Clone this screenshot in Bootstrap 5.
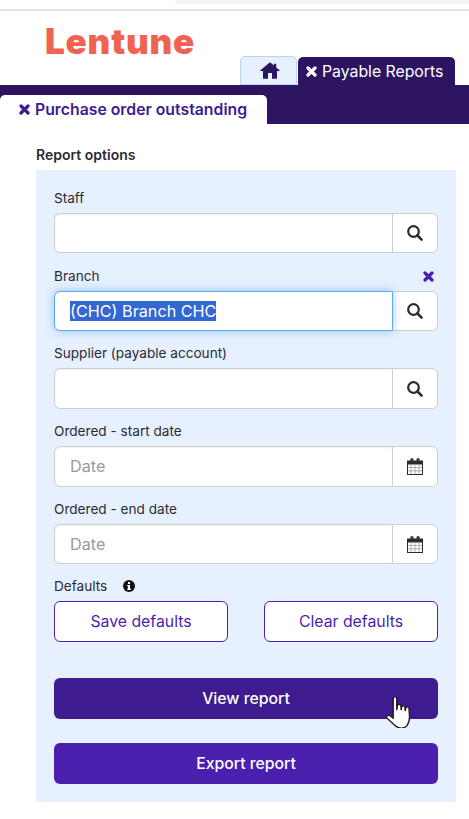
<!DOCTYPE html>
<html lang="en">
<head>
    <meta charset="UTF-8">
    <meta name="viewport" content="width=device-width, initial-scale=1.0">
    <title>Purchase order outstanding</title>
    <link href="https://cdn.jsdelivr.net/npm/bootstrap@5.3.0/dist/css/bootstrap.min.css" rel="stylesheet">
    <style>
        body {
            background-color: #fff;
            font-family: "Inter", "Liberation Sans", sans-serif;
            font-size: 14px;
            color: #2b2b33;
            height: 819px;
            overflow: hidden;
            position: relative;
        }
        .chrome-strip {
            height: 11px;
            border-bottom: 2px solid #e2e2e2;
            padding-left: 175px;
        }
        .chrome-pill {
            height: 4px;
            background: #f1f3f4;
            border-bottom-left-radius: 10px;
        }
        .top-head {
            height: 74px;
            padding-left: 45px;
        }
        .brand-word {
            color: #f06353;
            font-weight: 900;
            font-size: 35px;
            line-height: 1;
            padding-top: 13px;
            letter-spacing: 0.8px;
        }
        .tab-home {
            width: 57px;
            height: 29px;
            background: #e6f0fe;
            border: 1px solid #b6d4f5;
            border-radius: 5px 5px 0 0;
            margin-right: 1px;
            padding-left: 2px;
        }
        .tab-dark {
            height: 28px;
            width: 157px;
            background: #2c1461;
            color: #fff;
            border-radius: 5px 5px 0 0;
            font-size: 15.8px;
            padding: 1px 0 0 8px;
            gap: 5px;
        }
        .tab-row {
            padding-right: 14px;
            height: 74px;
        }
        .sub-bar {
            height: 39px;
            background: #2c1461;
            padding-top: 10px;
        }
        .tab-light {
            width: 267px;
            height: 29px;
            background: #fff;
            color: #3d1c8f;
            border-radius: 5px 5px 0 0;
            font-size: 15.8px;
            font-weight: 600;
            padding-left: 19px;
            gap: 5px;
        }
        .opts-title {
            margin: 22px 0 0 36px;
            height: 24px;
            line-height: 18px;
            font-size: 14px;
            font-weight: 600;
        }
        .opts-panel {
            margin-left: 36px;
            width: 420px;
            height: 632px;
            background: #e6f0fe;
            padding: 17.75px 18px 18px;
        }
        .fld-label {
            line-height: 21px;
            margin-bottom: 4px;
            font-size: 13.6px;
        }
        .fld {
            margin-bottom: 12.25px;
        }
        .fld-last {
            margin-bottom: 11.5px;
        }
        .fld .form-control {
            height: 40.5px;
            font-size: 16.2px;
            padding-left: 15px;
            color: #2b2b33;
            border-color: #cfcfcf;
            box-shadow: inset 0 1px 2px rgba(0, 0, 0, .06);
        }
        .fld .form-control::placeholder {
            color: #9a9a9f;
        }
        .fld .form-control:focus {
            border-color: #5eaaf0;
            box-shadow: 0 0 8px rgba(94, 170, 240, .65);
            position: relative;
            z-index: 5;
        }
        .fld .form-control::selection {
            background: #3367d1;
            color: #fff;
        }
        .addon {
            width: 46px;
            justify-content: center;
            background: #fff;
            border-color: #cfcfcf;
            padding: 0;
        }
        .btn-line {
            width: 174px;
            height: 41px;
            background: #fff;
            color: #4b1fae;
            border: 1px solid #4b1fae;
            font-size: 15.8px;
            padding: 1px 0 0;
        }
        .btn-solid {
            height: 41px;
            color: #fff;
            font-size: 15.8px;
            font-weight: 450;
            padding: 1px 0 0;
            background: #4b1fae;
            border: 0;
        }
        .btn-hover {
            background: #3e1b8e;
        }
        .view-gap {
            margin-top: 36px;
        }
        .hand-cursor {
            position: absolute;
            left: 386px;
            top: 697px;
        }
    </style>
</head>
<body>
    <div class="chrome-strip"><div class="chrome-pill"></div></div>

    <div class="top-head d-flex justify-content-between">
        <div class="brand-word">Lentune</div>
        <div class="tab-row d-flex align-items-end">
            <div class="tab-home d-flex align-items-center justify-content-center">
                <svg width="20" height="17" viewBox="0 0 20 17"><path fill="#2c1461" d="M10 0.3 L14 3.6 V1.8 H16.2 V5.4 L19.6 8.2 V9 H17 V16.7 H12 V11 H8 V16.7 H3 V9 H0.4 V8.2 Z"/></svg>
            </div>
            <div class="tab-dark d-flex align-items-center">
                <svg width="11" height="11" viewBox="0 0 11 11"><path stroke="#fff" stroke-width="3.2" stroke-linecap="round" d="M2 2 L9 9 M9 2 L2 9"/></svg>
                <span>Payable Reports</span>
            </div>
        </div>
    </div>

    <div class="sub-bar">
        <div class="tab-light d-flex align-items-center">
            <svg width="11" height="11" viewBox="0 0 11 11"><path stroke="#3d1c8f" stroke-width="3.2" stroke-linecap="round" d="M2 2 L9 9 M9 2 L2 9"/></svg>
            <span>Purchase order outstanding</span>
        </div>
    </div>

    <div class="opts-title">Report options</div>

    <div class="opts-panel">
        <div class="fld">
            <div class="fld-label">Staff</div>
            <div class="input-group">
                <input type="text" class="form-control">
                <span class="input-group-text addon"><svg width="18" height="18" viewBox="0 0 18 18"><circle cx="7.5" cy="7.5" r="5.3" fill="none" stroke="#2b2b33" stroke-width="2.2"/><path stroke="#2b2b33" stroke-width="2.6" stroke-linecap="round" d="M11.5 11.5 L15.6 15.6"/></svg></span>
            </div>
        </div>
        <div class="fld">
            <div class="fld-label d-flex justify-content-between align-items-center">
                <span>Branch</span>
                <svg class="me-1" width="11" height="11" viewBox="0 0 11 11"><path stroke="#4b1fae" stroke-width="3.2" stroke-linecap="round" d="M2 2 L9 9 M9 2 L2 9"/></svg>
            </div>
            <div class="input-group">
                <input type="text" id="branchInput" class="form-control" value="(CHC) Branch CHC">
                <span class="input-group-text addon"><svg width="18" height="18" viewBox="0 0 18 18"><circle cx="7.5" cy="7.5" r="5.3" fill="none" stroke="#2b2b33" stroke-width="2.2"/><path stroke="#2b2b33" stroke-width="2.6" stroke-linecap="round" d="M11.5 11.5 L15.6 15.6"/></svg></span>
            </div>
        </div>
        <div class="fld">
            <div class="fld-label">Supplier (payable account)</div>
            <div class="input-group">
                <input type="text" class="form-control">
                <span class="input-group-text addon"><svg width="18" height="18" viewBox="0 0 18 18"><circle cx="7.5" cy="7.5" r="5.3" fill="none" stroke="#2b2b33" stroke-width="2.2"/><path stroke="#2b2b33" stroke-width="2.6" stroke-linecap="round" d="M11.5 11.5 L15.6 15.6"/></svg></span>
            </div>
        </div>
        <div class="fld">
            <div class="fld-label">Ordered - start date</div>
            <div class="input-group">
                <input type="text" class="form-control" placeholder="Date">
                <span class="input-group-text addon"><svg width="16" height="17" viewBox="0 0 16 17"><rect x="0.5" y="3" width="15" height="13.5" fill="#fff" stroke="#2b2b33"/><rect x="0.5" y="3" width="15" height="3.5" fill="#2b2b33"/><path stroke="#2b2b33" stroke-width="1.4" fill="none" d="M4 4 V1.6 A0.9 0.9 0 0 1 5.8 1.6 V4 M10.2 4 V1.6 A0.9 0.9 0 0 1 12 1.6 V4"/><path stroke="#b59a8a" stroke-width="0.8" d="M4 6.5 V16 M8 6.5 V16 M12 6.5 V16 M1 9.5 H15 M1 12.8 H15"/></svg></span>
            </div>
        </div>
        <div class="fld fld-last">
            <div class="fld-label">Ordered - end date</div>
            <div class="input-group">
                <input type="text" class="form-control" placeholder="Date">
                <span class="input-group-text addon"><svg width="16" height="17" viewBox="0 0 16 17"><rect x="0.5" y="3" width="15" height="13.5" fill="#fff" stroke="#2b2b33"/><rect x="0.5" y="3" width="15" height="3.5" fill="#2b2b33"/><path stroke="#2b2b33" stroke-width="1.4" fill="none" d="M4 4 V1.6 A0.9 0.9 0 0 1 5.8 1.6 V4 M10.2 4 V1.6 A0.9 0.9 0 0 1 12 1.6 V4"/><path stroke="#b59a8a" stroke-width="0.8" d="M4 6.5 V16 M8 6.5 V16 M12 6.5 V16 M1 9.5 H15 M1 12.8 H15"/></svg></span>
            </div>
        </div>
        <div class="fld-label d-flex align-items-center gap-3">
            <span>Defaults</span>
            <svg width="12" height="12" viewBox="0 0 12 12"><circle cx="6" cy="6" r="6" fill="#111"/><rect x="5" y="2" width="2" height="2" fill="#fff"/><path fill="#fff" d="M4.3 5 H7 V8.6 H7.8 V10 H4.3 V8.6 H5.1 V6.4 H4.3 Z"/></svg>
        </div>
        <div class="d-flex justify-content-between">
            <button type="button" class="btn btn-line">Save defaults</button>
            <button type="button" class="btn btn-line">Clear defaults</button>
        </div>
        <div class="d-grid view-gap">
            <button type="button" class="btn btn-solid btn-hover">View report</button>
        </div>
        <div class="d-grid mt-4">
            <button type="button" class="btn btn-solid">Export report</button>
        </div>
    </div>

    <svg class="hand-cursor" width="24" height="31" viewBox="2 1.5 20 30.5" preserveAspectRatio="none"><path fill="#fff" stroke="#1c1c24" stroke-width="1.2" stroke-linejoin="round" d="M8 3 C8 1 11 1 11 3 V14 L11.6 9.6 C12 8.4 14.2 8.4 14.4 9.8 L14.6 14 L15.2 11 C15.6 9.8 17.6 9.8 17.8 11.2 L18 15 L18.6 12.2 C19 11 21 11 21.2 12.6 L21.6 20 C21.8 24 21 27 19.6 29.5 C18 32.5 12.5 33 10 30 L3 22.5 C1.5 20.5 3.8 18.6 5.6 20 L8 22.4 Z"/></svg>

    <script>
        // branch field is shown focused with its text selected
        const branch = document.getElementById("branchInput");
        branch.focus();
        branch.select();
    </script>
    <script src="https://cdn.jsdelivr.net/npm/bootstrap@5.3.0/dist/js/bootstrap.bundle.min.js"></script>
</body>
</html>
